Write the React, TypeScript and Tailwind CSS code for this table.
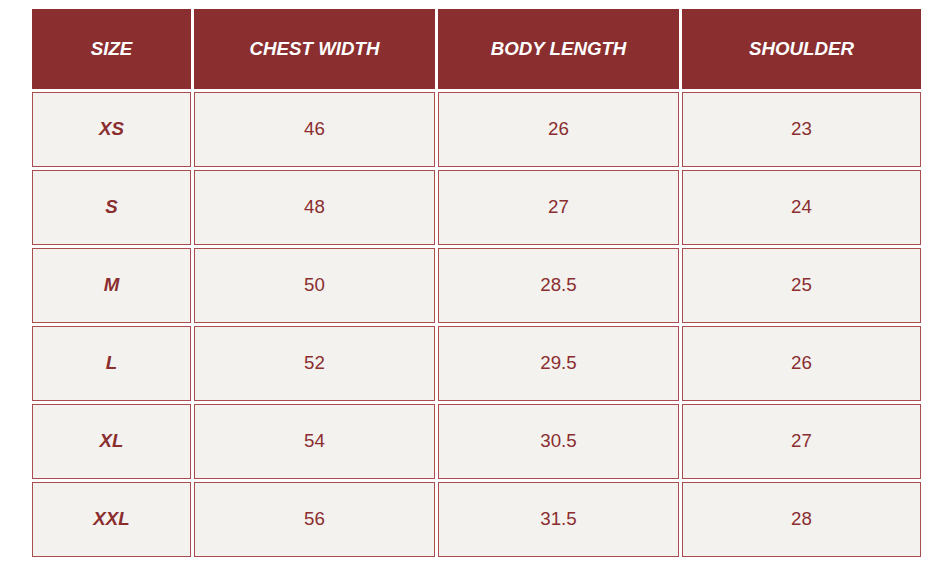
const headers = ["SIZE", "CHEST WIDTH", "BODY LENGTH", "SHOULDER"];

const rows = [
  ["XS", "46", "26", "23"],
  ["S", "48", "27", "24"],
  ["M", "50", "28.5", "25"],
  ["L", "52", "29.5", "26"],
  ["XL", "54", "30.5", "27"],
  ["XXL", "56", "31.5", "28"],
];

export default function App() {
  return (
    <div className="w-[952px] h-[572px] bg-white pt-[6px] pl-[29px] font-['Liberation_Sans',Arial,sans-serif]">
      <table className="border-separate border-spacing-[3px] table-fixed w-[895px]">
        <colgroup>
          <col className="w-[159px]" />
          <col className="w-[241px]" />
          <col className="w-[241px]" />
          <col className="w-[239px]" />
        </colgroup>
        <thead>
          <tr>
            {headers.map((h) => (
              <th
                key={h}
                className="h-[80px] bg-[#8a2e2f] border border-[#8a2e2f] text-white text-[18.7px] font-bold italic text-center align-middle"
              >
                {h}
              </th>
            ))}
          </tr>
        </thead>
        <tbody>
          {rows.map((row) => (
            <tr key={row[0]}>
              {row.map((cell, i) => (
                <td
                  key={i}
                  className={
                    "h-[75px] bg-[#f4f2ef] border border-[#a94d50] text-[#8a2e2f] text-[18.7px] text-center align-middle " +
                    (i === 0 ? "font-bold italic" : "")
                  }
                >
                  {cell}
                </td>
              ))}
            </tr>
          ))}
        </tbody>
      </table>
    </div>
  );
}
